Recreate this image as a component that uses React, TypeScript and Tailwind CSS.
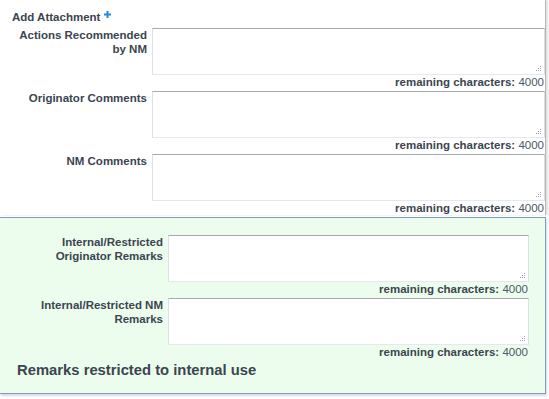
import React from 'react';

const font = { fontFamily: '"Liberation Sans", Arial, sans-serif' };

function Grip() {
  return (
    <svg width="7" height="7" viewBox="0 0 7 7" className="absolute bottom-[3px] right-[3px]">
      <rect x="5" y="1" width="1" height="1" fill="#9aa3ad" />
      <rect x="3" y="3" width="1" height="1" fill="#9aa3ad" />
      <rect x="5" y="3" width="1" height="1" fill="#9aa3ad" />
      <rect x="1" y="5" width="1" height="1" fill="#9aa3ad" />
      <rect x="3" y="5" width="1" height="1" fill="#9aa3ad" />
      <rect x="5" y="5" width="1" height="1" fill="#9aa3ad" />
    </svg>
  );
}

function Field({ label, labelWidth }: { label: React.ReactNode; labelWidth: string }) {
  return (
    <div className="mb-[2px]">
      <div className="flex">
        <div className={`${labelWidth} shrink-0 pr-[5px] text-right text-[11.5px] font-bold leading-[14px] text-[#3b4550]`}>
          {label}
        </div>
        <div className="relative flex-1">
          <textarea
            className="block h-[47px] w-full resize-none border border-[#dbdfe6] border-t-[#a6abb3] border-b-[#e3e9ef] bg-white outline-none"
          />
          <Grip />
        </div>
      </div>
      <div className="pr-[1px] text-right text-[11.5px] leading-[14px] text-[#3b4550]">
        <span className="font-bold">remaining characters:</span>{' '}
        <span className="text-[#4a5866]">4000</span>
      </div>
    </div>
  );
}

export default function App() {
  return (
    <div className="w-[549px] h-[399px] bg-white" style={font}>
      <div className="w-[546px]">
        <div className="border-r border-[#b5b5b5] shadow-[2px_0_2px_rgba(0,0,0,0.12)] pt-[9px]">
          <div className="flex items-start pl-[12px] text-[11.5px] font-bold leading-[16px] text-[#3b4550]">
            <span>Add Attachment</span>
            <svg width="7" height="7" viewBox="0 0 7 7" className="ml-[4px] mt-[2px]">
              <rect x="2.5" y="0" width="2" height="7" fill="#1e8fd6" />
              <rect x="0" y="2.5" width="7" height="2" fill="#1e8fd6" />
            </svg>
          </div>
          <div className="mt-[3px]">
            <Field labelWidth="w-[152px]" label={<>Actions Recommended<br />by NM</>} />
            <Field labelWidth="w-[152px]" label="Originator Comments" />
            <Field labelWidth="w-[152px]" label="NM Comments" />
          </div>
        </div>
        <div className="border-y border-r border-[#7f9cc4] bg-[#edfded] pt-[17px] pb-[14px] pr-[16px] shadow-[1px_2px_2px_rgba(0,0,0,0.15)]">
          <Field labelWidth="w-[168px]" label={<>Internal/Restricted<br />Originator Remarks</>} />
          <Field labelWidth="w-[168px]" label={<>Internal/Restricted NM<br />Remarks</>} />
          <div className="pl-[17px] text-[14.8px] font-bold leading-[18px] text-[#3b4550]">
            Remarks restricted to internal use
          </div>
        </div>
      </div>
    </div>
  );
}
